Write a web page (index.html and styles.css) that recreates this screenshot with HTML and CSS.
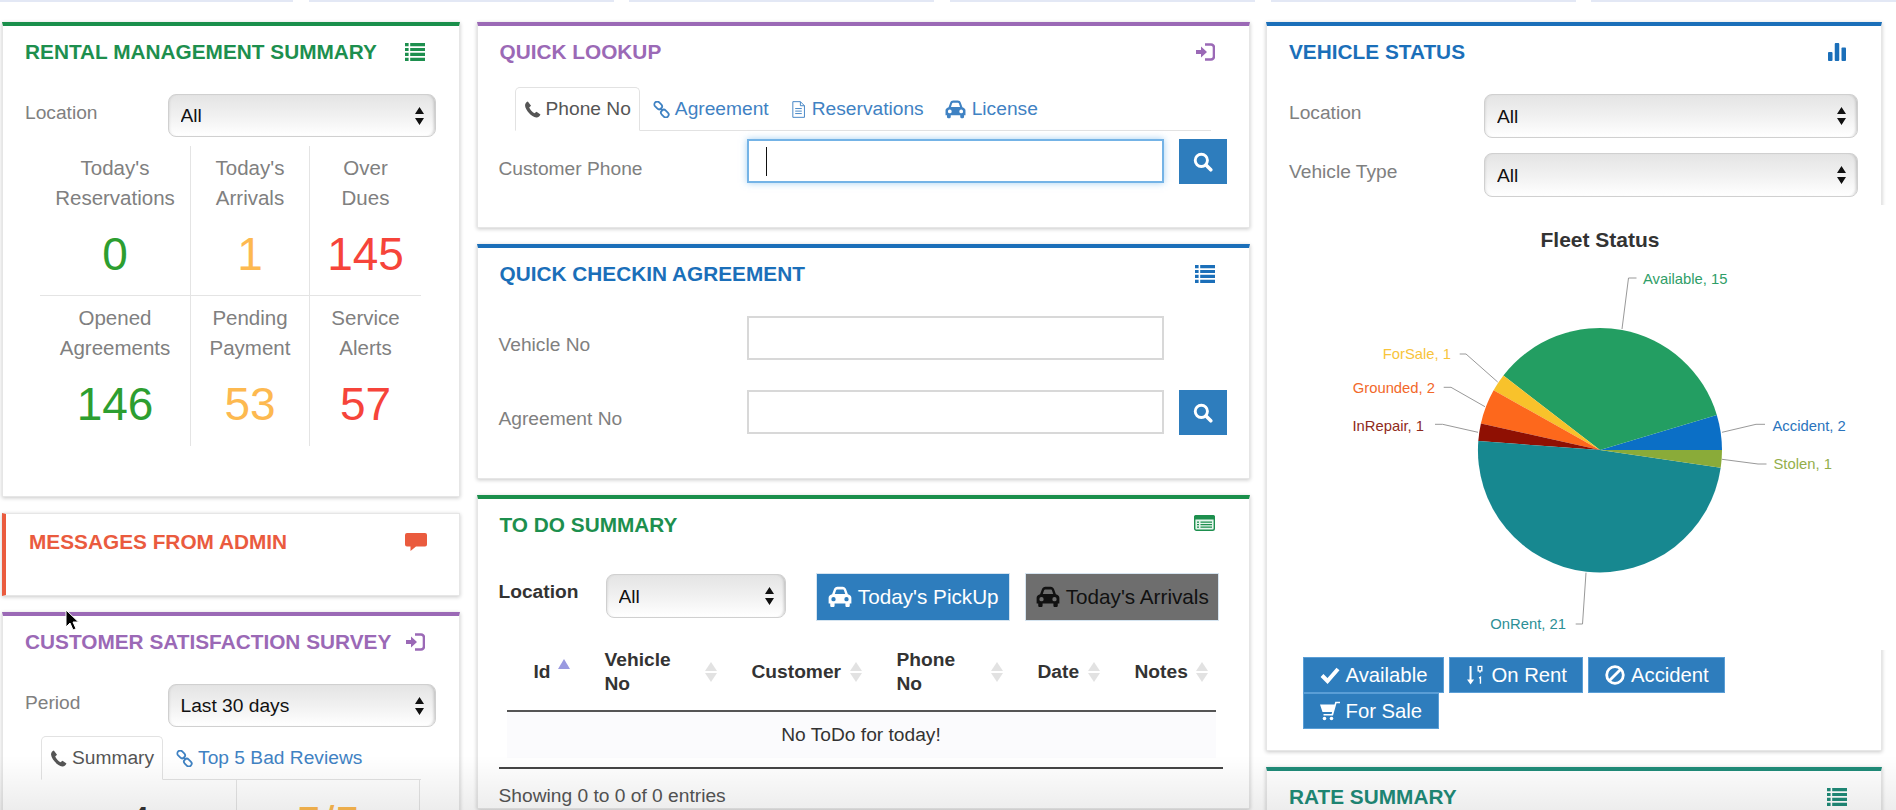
FILE: index.html
```html
<!DOCTYPE html>
<html lang="en">
<head>
    <meta charset="UTF-8">
    <title>Dashboard</title>
    <link rel="stylesheet" href="styles.css">
</head>
<body>
    <!-- icon sprite -->
    <svg class="sprite" xmlns="http://www.w3.org/2000/svg">
        <symbol id="i-list" viewBox="0 0 20 18"><path d="M0 0h3.6v3.2H0zM5.2 0H20v3.2H5.2zM0 4.9h3.6v3.2H0zM5.2 4.9H20v3.2H5.2zM0 9.8h3.6V13H0zM5.2 9.8H20V13H5.2zM0 14.7h3.6v3.2H0zM5.2 14.7H20v3.2H5.2z"/></symbol>
        <symbol id="i-signin" viewBox="0 0 20 18"><path d="M1 7h5V3.5L12 9l-6 5.500V11H1z"/><path d="M10 1.500h6a3 3 0 0 1 3 3v9a3 3 0 0 1-3 3h-6" fill="none" stroke="currentColor" stroke-width="2.600"/></symbol>
        <symbol id="i-comment" viewBox="0 0 22 18"><path d="M2 0h18a2 2 0 0 1 2 2v9.500a2 2 0 0 1-2 2H11L5.500 18v-4.500H2a2 2 0 0 1-2-2V2a2 2 0 0 1 2-2z"/></symbol>
        <symbol id="i-bars" viewBox="0 0 20 20"><rect x="0" y="10" width="5" height="10" rx="1"/><rect x="7.500" y="0" width="5" height="20" rx="1"/><rect x="15" y="5" width="5" height="15" rx="1"/></symbol>
        <symbol id="i-phone" viewBox="0 0 16 16"><path d="M3.600.5C2.300 1 .8 2.300 1 4.500 1.400 8.500 7 15 11.500 15.500c2 .2 3.500-1.500 4-2.800L11.800 10l-2 1.600C8 10.800 5.500 8 4.900 6.200l1.700-1.800z"/></symbol>
        <symbol id="i-link" viewBox="0 0 18 18"><g fill="none" stroke="currentColor" stroke-width="1.900"><rect x="1" y="1.700" width="9" height="6" rx="3" transform="rotate(45 5.500 4.700)"/><rect x="8" y="10.300" width="9" height="6" rx="3" transform="rotate(45 12.500 13.300)"/><path d="M7.500 7.500l3 3"/></g></symbol>
        <symbol id="i-file" viewBox="0 0 14 18"><path d="M1 .7h8l4.300 4.300v12.300H1zM9 .7V5h4.300M3.500 8h7M3.500 10.700h7M3.500 13.300h7" fill="none" stroke="currentColor" stroke-width="1"/></symbol>
        <symbol id="i-car" viewBox="0 0 24 20"><path fill-rule="evenodd" d="M9.600.5h4.800c1.500 0 2.700.9 3.200 2.300l1.700 4.700c1.600.6 3.200 1.500 3.200 3.200v5.300H21v2c0 .7-.5 1.200-1.200 1.200h-1.600c-.7 0-1.200-.5-1.200-1.200v-2H7v2c0 .7-.5 1.200-1.200 1.200H4.200C3.500 19.200 3 18.700 3 18v-2H1.500v-5.300c0-1.700 1.600-2.600 3.200-3.200l1.700-4.700C6.900 1.400 8.100.5 9.600.5zM9.500 3c-.7 0-1 .3-1.200.9L7.200 7.300h9.600l-1.100-3.400c-.2-.6-.5-.9-1.200-.9zM6 10a2 2 0 1 0 0 4 2 2 0 1 0 0-4zM18 10a2 2 0 1 0 0 4 2 2 0 1 0 0-4z"/></symbol>
        <symbol id="i-search" viewBox="0 0 18 18"><circle cx="7.500" cy="7.500" r="5.500" fill="none" stroke="currentColor" stroke-width="2.600"/><path d="M11.700 11.700L16 16" fill="none" stroke="currentColor" stroke-width="3.200" stroke-linecap="round"/></symbol>
        <symbol id="i-listalt" viewBox="0 0 21 16"><rect x=".7" y=".7" width="19.600" height="14.600" rx="1.800" fill="#e6f5ec" stroke="currentColor" stroke-width="1.400"/><path d="M0 2a2 2 0 0 1 2-2h17a2 2 0 0 1 2 2v2.500H0z"/><path d="M3 6.500h2v1.300H3zM6.500 6.500H18v1.300H6.500zM3 9h2v1.300H3zM6.500 9H18v1.300H6.500zM3 11.500h2v1.300H3zM6.500 11.500H18v1.300H6.500z"/></symbol>
        <symbol id="i-check" viewBox="0 0 20 18"><path d="M2 9.500l5.500 5.500L18 3" fill="none" stroke="currentColor" stroke-width="4"/></symbol>
        <symbol id="i-sort" viewBox="0 0 20 22"><path d="M4 1h2.200v15H9l-3.900 5.500L1.200 16H4z"/><path d="M13.500 1.500h4v5h-4zM15.500 6.500v2M14.500 14.500l1.500-1v7" fill="none" stroke="currentColor" stroke-width="1.500"/></symbol>
        <symbol id="i-ban" viewBox="0 0 20 20"><circle cx="10" cy="10" r="8.300" fill="none" stroke="currentColor" stroke-width="2.800"/><path d="M4.500 15.500l11-11" stroke="currentColor" stroke-width="2.800"/></symbol>
        <symbol id="i-cart" viewBox="0 0 20 20"><path d="M0 3.500h14.500l.8-2.800H20v1.600h-3.500L13 14.500H3.500v-1.600h8.100l.5-1.900H2.500z"/><circle cx="4.500" cy="17.500" r="1.800"/><circle cx="11.500" cy="17.500" r="1.800"/></symbol>
    </svg>

    <div class="strip">
        <span></span><span></span><span></span><span></span><span></span><span></span>
    </div>

    <main class="layout">
        <!-- columna izquierda -->
        <div class="col">
            <section class="card card-green h-summary">
                <header class="head">
                    <h2>RENTAL MANAGEMENT SUMMARY</h2>
                    <svg class="ico"><use href="#i-list"/></svg>
                </header>
                <div class="row-select left">
                    <label>Location</label>
                    <select><option>All</option></select>
                </div>
                <div class="stats">
                    <div class="stat"><p>Today's<br>Reservations</p><b class="green">0</b></div>
                    <div class="stat"><p>Today's<br>Arrivals</p><b class="orange">1</b></div>
                    <div class="stat"><p>Over<br>Dues</p><b class="red">145</b></div>
                    <div class="stat"><p>Opened<br>Agreements</p><b class="green">146</b></div>
                    <div class="stat"><p>Pending<br>Payment</p><b class="orange">53</b></div>
                    <div class="stat"><p>Service<br>Alerts</p><b class="red">57</b></div>
                </div>
            </section>

            <section class="card card-msg h-msg">
                <header class="head">
                    <h2>MESSAGES FROM ADMIN</h2>
                    <svg class="ico ico-wide"><use href="#i-comment"/></svg>
                </header>
            </section>

            <section class="card card-purple">
                <header class="head">
                    <h2>CUSTOMER SATISFACTION SURVEY</h2>
                    <svg class="ico"><use href="#i-signin"/></svg>
                </header>
                <div class="row-select left">
                    <label>Period</label>
                    <select><option>Last 30 days</option></select>
                </div>
                <ul class="tabs tabs-left">
                    <li class="active"><svg class="tab-ico"><use href="#i-phone"/></svg>Summary</li>
                    <li><svg class="tab-ico"><use href="#i-link"/></svg>Top 5 Bad Reviews</li>
                </ul>
                <div class="survey">
                    <div class="survey-cell">4</div>
                    <div class="survey-cell orange">5/5</div>
                </div>
            </section>
        </div>

        <!-- columna central -->
        <div class="col">
            <section class="card card-purple h-lookup">
                <header class="head">
                    <h2>QUICK LOOKUP</h2>
                    <svg class="ico"><use href="#i-signin"/></svg>
                </header>
                <ul class="tabs tabs-mid">
                    <li class="active"><svg class="tab-ico"><use href="#i-phone"/></svg>Phone No</li>
                    <li><svg class="tab-ico"><use href="#i-link"/></svg>Agreement</li>
                    <li><svg class="tab-ico"><use href="#i-file"/></svg>Reservations</li>
                    <li><svg class="tab-ico tab-car"><use href="#i-car"/></svg>License</li>
                </ul>
                <div class="field field-first">
                    <label>Customer Phone</label>
                    <div class="input-wrap">
                        <input class="focused" type="text">
                        <span class="caret"></span>
                    </div>
                    <button class="btn-search"><svg><use href="#i-search"/></svg></button>
                </div>
            </section>

            <section class="card card-blue h-checkin">
                <header class="head">
                    <h2>QUICK CHECKIN AGREEMENT</h2>
                    <svg class="ico"><use href="#i-list"/></svg>
                </header>
                <div class="field field-check">
                    <label>Vehicle No</label>
                    <div class="input-wrap"><input type="text"></div>
                </div>
                <div class="field field-check2">
                    <label>Agreement No</label>
                    <div class="input-wrap"><input type="text"></div>
                    <button class="btn-search"><svg><use href="#i-search"/></svg></button>
                </div>
            </section>

            <section class="card card-green">
                <header class="head">
                    <h2>TO DO SUMMARY</h2>
                    <svg class="ico ico-alt"><use href="#i-listalt"/></svg>
                </header>
                <div class="toolbar">
                    <label>Location</label>
                    <select><option>All</option></select>
                    <button class="btn btn-pick"><svg><use href="#i-car"/></svg>Today's PickUp</button>
                    <button class="btn btn-arr"><svg><use href="#i-car"/></svg>Today's Arrivals</button>
                </div>
                <table class="todo">
                    <colgroup>
                        <col class="c1"><col class="c2"><col class="c3"><col class="c4"><col class="c5"><col class="c6">
                    </colgroup>
                    <thead>
                        <tr>
                            <th><div>Id<i class="asc"></i></div></th>
                            <th><div>Vehicle<br>No<i class="both"></i></div></th>
                            <th><div>Customer<i class="both"></i></div></th>
                            <th><div>Phone<br>No<i class="both"></i></div></th>
                            <th><div>Date<i class="both"></i></div></th>
                            <th><div>Notes<i class="both"></i></div></th>
                        </tr>
                    </thead>
                    <tbody>
                        <tr><td colspan="6">No ToDo for today!</td></tr>
                    </tbody>
                </table>
                <div class="table-foot">Showing 0 to 0 of 0 entries</div>
            </section>
        </div>

        <!-- columna derecha -->
        <div class="col">
            <section class="card card-blue h-status">
                <header class="head">
                    <h2>VEHICLE STATUS</h2>
                    <svg class="ico"><use href="#i-bars"/></svg>
                </header>
                <div class="row-select right">
                    <label>Location</label>
                    <select><option>All</option></select>
                </div>
                <div class="row-select right second">
                    <label>Vehicle Type</label>
                    <select><option>All</option></select>
                </div>
                <svg class="chart" viewBox="1267 205 630 445" xmlns="http://www.w3.org/2000/svg">
                    <text class="chart-title" x="1600" y="247">Fleet Status</text>
                    <g transform="translate(1600 450)">
                        <path fill="#0b6fc6" d="M0 0L122 0A122 122 0 0 0 116.800 -35.100Z"/>
                        <path fill="#239e62" d="M0 0L116.800 -35.100A122 122 0 0 0 -96.600 -74.500Z"/>
                        <path fill="#f8c22b" d="M0 0L-96.600 -74.500A122 122 0 0 0 -106.400 -59.700Z"/>
                        <path fill="#fd681c" d="M0 0L-106.400 -59.700A122 122 0 0 0 -119.100 -26.500Z"/>
                        <path fill="#8f1003" d="M0 0L-119.100 -26.500A122 122 0 0 0 -121.700 -8.900Z"/>
                        <path fill="#178890" d="M0 0L-121.700 -8.900A122 122 0 0 0 120.700 17.800Z"/>
                        <path fill="#8aab39" d="M0 0L120.700 17.800A122 122 0 0 0 122 0Z"/>
                    </g>
                    <g class="leaders">
                        <path d="M1622 329L1628.500 278H1636.500"/>
                        <path d="M1459.700 354H1466L1497.700 382"/>
                        <path d="M1443.700 387.300H1451L1485 406.700"/>
                        <path d="M1435 424.300H1442.600L1478 432.300"/>
                        <path d="M1765 424.300H1756L1722 432.300"/>
                        <path d="M1766.500 464H1758L1722 459.300"/>
                        <path d="M1586 572.700L1582.500 624H1575.700"/>
                    </g>
                    <g class="labels">
                        <text x="1643" y="284" fill="#2f9e68">Available, 15</text>
                        <text x="1451" y="359" class="end" fill="#f8c43a">ForSale, 1</text>
                        <text x="1435" y="393" class="end" fill="#f2682a">Grounded, 2</text>
                        <text x="1424" y="431" class="end" fill="#8f2a20">InRepair, 1</text>
                        <text x="1772.500" y="431" fill="#2a74bd">Accident, 2</text>
                        <text x="1773.500" y="469" fill="#93ae4a">Stolen, 1</text>
                        <text x="1566" y="629" class="end" fill="#2d8f96">OnRent, 21</text>
                    </g>
                </svg>
                <div class="status-btns">
                    <button class="sbtn"><svg><use href="#i-check"/></svg>Available</button>
                    <button class="sbtn"><svg><use href="#i-sort"/></svg>On Rent</button>
                    <button class="sbtn"><svg><use href="#i-ban"/></svg>Accident</button>
                    <button class="sbtn"><svg><use href="#i-cart"/></svg>For Sale</button>
                </div>
            </section>

            <section class="card card-teal">
                <header class="head">
                    <h2>RATE SUMMARY</h2>
                    <svg class="ico"><use href="#i-list"/></svg>
                </header>
            </section>
        </div>
    </main>

    <svg class="cursor" viewBox="0 0 14 22" xmlns="http://www.w3.org/2000/svg"><path d="M1 1v17l4-4 3 7 3-1.300-3-6.700h5.500z" fill="#000" stroke="#fff" stroke-width="1"/></svg>
    <div class="fade"></div>
</body>
</html>
```

FILE: styles.css
```css
* {
    box-sizing: border-box;
}
html, body {
    margin: 0;
    height: 810px;
    overflow: hidden;
}
body {
    position: relative;
    background: #fff;
    font-family: "Liberation Sans", Arial, sans-serif;
    font-size: 19.2px;
    color: #333;
}
.sprite {
    display: none;
}

/* tiras de arriba */
.strip {
    display: flex;
    gap: 15.7px;
    height: 2px;
    margin-left: -12px;
}
.strip span {
    flex: 0 0 305px;
    background: #e3e8f5;
}

.layout {
    display: grid;
    grid-template-columns: 458px 773px 615.5px;
    column-gap: 16.5px;
    padding: 20px 0 0 2px;
}
.col {
    display: flex;
    flex-direction: column;
    gap: 16px;
}

/* cards */
.card {
    flex: none;
    background: #fff;
    border: 1px solid #e6e6e6;
    border-top: 4px solid #000;
    box-shadow: 0 1px 4px rgba(0, 0, 0, 0.22);
}
.card-green { border-top-color: #1a8f4b; color: #1d8f4e; }
.card-purple { border-top-color: #9b69b6; color: #9b69b6; }
.card-blue { border-top-color: #1b6fb9; color: #1b6fb9; }
.card-teal { border-top-color: #1f8b78; color: #1f8b78; }
.card-msg {
    border-top: 1px solid #e6e6e6;
    border-left: 4px solid #ea5b3e;
    color: #ea5b3e;
}
.h-summary { height: 475px; }
.h-msg { height: 83px; }
.h-lookup { height: 206px; }
.h-checkin { height: 235px; }
.h-status { height: 729px; }

.head {
    display: flex;
    justify-content: space-between;
    align-items: center;
    height: 52px;
    padding: 0 34px 0 22px;
}
.card-msg .head {
    padding: 3px 32px 0 23px;
}
.head h2 {
    margin: 0;
    font-size: 20.8px;
    font-weight: bold;
    white-space: nowrap;
}
.ico {
    flex: none;
    width: 20px;
    height: 18px;
    fill: currentColor;
}
.ico-wide {
    width: 22px;
}
.ico-alt {
    width: 21px;
    height: 16px;
    margin-top: -4px;
}

/* selects */
select {
    appearance: none;
    -webkit-appearance: none;
    height: 43px;
    padding: 0 30px 0 12px;
    border: 1px solid #d0d0d0;
    border-radius: 8px;
    font-family: inherit;
    font-size: 19.2px;
    color: #111;
    background:
        url("data:image/svg+xml,%3Csvg xmlns='http://www.w3.org/2000/svg' width='9' height='18'%3E%3Cpath d='M4.500 0L9 7H0zM4.500 18L0 11h9z' fill='%23111'/%3E%3C/svg%3E") no-repeat right 11px center,
        linear-gradient(#e4e4e4, #f2f2f2 55%, #fff);
    box-shadow: inset 2px 0 3px -2px rgba(0, 0, 0, 0.15), inset -3px 0 3px -2px rgba(0, 0, 0, 0.2);
}
.row-select {
    display: flex;
    align-items: flex-start;
    margin-top: 16px;
}
.row-select label {
    flex: none;
    line-height: 38px;
    color: #808080;
}
.row-select.left {
    padding-left: 22px;
}
.row-select.left label {
    width: 142.5px;
}
.row-select.left select {
    width: 268.5px;
}
.row-select.right {
    padding-left: 22px;
}
.row-select.right label {
    width: 195px;
}
.row-select.right select {
    width: 374px;
    height: 44px;
}
.row-select.second {
    margin-top: 15px;
}

/* contadores */
.stats {
    display: grid;
    grid-template-columns: 151px 119px 111px;
    width: 381px;
    margin: 9px 0 0 37px;
}
.stat {
    height: 150px;
    padding-top: 7px;
    text-align: center;
    border-right: 1px solid #e4e4e4;
}
.stat:nth-child(3n) {
    border-right: none;
}
.stat:nth-child(-n+3) {
    border-bottom: 1px solid #e4e4e4;
}
.stat p {
    margin: 0;
    font-size: 20.5px;
    line-height: 30px;
    color: #808080;
}
.stat b {
    display: block;
    margin-top: 16px;
    font-size: 46px;
    font-weight: normal;
    line-height: 50px;
}
.green { color: #2d9e30; }
.orange { color: #fdb950; }
.red { color: #f6443a; }

/* tabs */
.tabs {
    display: flex;
    margin: 9px 0 0;
    padding: 0;
    list-style: none;
    height: 44px;
    border-bottom: 1px solid #e2e2e2;
}
.tabs-left {
    width: 380px;
    margin-left: 38px;
}
.tabs-mid {
    width: 696px;
    margin-left: 37px;
}
.tabs li {
    display: flex;
    align-items: center;
    height: 44px;
    padding: 0 10.5px;
    color: #3f82c3;
}
.tabs li.active {
    padding: 0 8px;
    margin-right: 2.5px;
    color: #555;
    background: #fff;
    border: 1px solid #e2e2e2;
    border-bottom: 1px solid #fff;
    border-radius: 5px 5px 0 0;
}
.tab-ico {
    flex: none;
    width: 17px;
    height: 17px;
    margin-right: 5px;
    fill: currentColor;
}
.tab-car {
    width: 23px;
    height: 19px;
    margin-right: 5px;
    margin-left: -1px;
}

/* formulario */
.field {
    display: flex;
    align-items: flex-start;
    padding-left: 21px;
}
.field label {
    flex: none;
    width: 248px;
    padding-top: 7px;
    line-height: 44px;
    color: #808080;
}
.field-first {
    margin-top: 8px;
}
.field-first label {
    padding-top: 8px;
}
.field-check {
    margin-top: 16px;
}
.field-check2 {
    margin-top: 23px;
}
.input-wrap {
    position: relative;
    flex: none;
    width: 417px;
}
.input-wrap input {
    display: block;
    width: 100%;
    height: 44px;
    border: 2px solid #d8d8d8;
    background: #fff;
    outline: none;
}
.input-wrap input.focused {
    border-color: #74b3e6;
    box-shadow: 0 0 7px rgba(102, 175, 233, 0.6);
}
.caret {
    position: absolute;
    left: 19px;
    top: 8px;
    width: 1px;
    height: 29px;
    background: #111;
}
.btn-search {
    flex: none;
    width: 48px;
    height: 45px;
    margin-left: 15px;
    padding: 0;
    border: none;
    background: #2e7dbd;
    color: #fff;
}
.btn-search svg {
    display: block;
    width: 20px;
    height: 20px;
    margin: auto;
}

/* todo */
.toolbar {
    display: flex;
    align-items: flex-start;
    margin-top: 22px;
    padding-left: 21px;
    color: #333;
}
.toolbar label {
    flex: none;
    width: 107px;
    line-height: 38px;
    font-weight: bold;
}
.toolbar select {
    flex: none;
    width: 180px;
    height: 44px;
    margin-top: 1px;
}
.btn {
    display: flex;
    align-items: center;
    justify-content: center;
    flex: none;
    width: 194.5px;
    height: 48px;
    padding: 0;
    border: 1px solid #d5e4f0;
    font-family: inherit;
    font-size: 20.7px;
}
.btn svg {
    width: 26px;
    height: 22px;
    margin-right: 5px;
    fill: currentColor;
}
.btn-pick {
    margin-left: 30px;
    background: #2e7dbd;
    color: #fff;
}
.btn-arr {
    margin-left: 14.5px;
    background: #6e6e6e;
    color: #111;
}
.todo {
    width: 709px;
    margin: 19px 0 0 29px;
    border-collapse: collapse;
    table-layout: fixed;
    color: #333;
}
.c1 { width: 71px; }
.c2 { width: 147px; }
.c3 { width: 145px; }
.c4 { width: 141px; }
.c5 { width: 97px; }
.c6 { width: 108px; }
.todo th {
    height: 71px;
    padding: 0 8px 6px 27px;
    border-bottom: 2px solid #555;
    text-align: left;
    font-size: 19.2px;
    line-height: 24px;
}
.todo th div {
    position: relative;
}
.todo th i {
    position: absolute;
    right: 0;
    top: 50%;
    width: 12px;
    height: 20px;
    margin-top: -10px;
}
.todo th i.both::before,
.todo th i.both::after,
.todo th i.asc::before {
    content: "";
    position: absolute;
    left: 0;
    border-left: 6px solid transparent;
    border-right: 6px solid transparent;
}
.todo th i.both::before {
    top: 0;
    border-bottom: 9px solid #e2e2e2;
}
.todo th i.both::after {
    bottom: 0;
    border-top: 9px solid #e2e2e2;
}
.todo th i.asc::before {
    top: -3px;
    border-bottom: 10px solid #9a9ae0;
}
.todo td {
    height: 47px;
    text-align: center;
    background: #fbfbfd;
}
.table-foot {
    margin: 9px 0 0 21px;
    width: 724px;
    padding-top: 15px;
    border-top: 2px solid #444;
    line-height: 24px;
    color: #555;
}

/* encuesta */
.survey {
    display: grid;
    grid-template-columns: 196px 183px;
    margin-left: 38px;
    width: 380px;
    color: #333;
}
.survey-cell {
    height: 80px;
    padding-top: 18px;
    font-size: 46px;
    line-height: 50px;
    text-align: center;
    border-right: 1px solid #e4e4e4;
}
.survey-cell.orange {
    color: #fdb950;
}

/* vehicle status */
.chart {
    display: block;
    width: 630px;
    height: 445px;
    margin-top: 8px;
    background: #fff;
}
.chart-title {
    font-size: 21px;
    font-weight: bold;
    fill: #333;
    text-anchor: middle;
}
.leaders path {
    fill: none;
    stroke: #999;
    stroke-width: 1;
}
.labels text {
    font-size: 14.8px;
}
.labels .end {
    text-anchor: end;
}
.status-btns {
    display: flex;
    flex-wrap: wrap;
    column-gap: 5px;
    width: 470px;
    margin: 7px 0 0 36px;
}
.sbtn {
    display: flex;
    align-items: center;
    height: 36px;
    padding: 0 15.5px;
    border: 1px solid #5a9ed6;
    background: #2e7dbd;
    color: #fff;
    font-family: inherit;
    font-size: 20.3px;
}
.sbtn svg {
    width: 20px;
    height: 20px;
    margin-right: 6px;
    fill: currentColor;
}

.cursor {
    position: absolute;
    left: 65px;
    top: 609px;
    width: 14px;
    height: 22px;
}
.fade {
    position: absolute;
    left: 0;
    right: 0;
    bottom: 0;
    height: 55px;
    background: linear-gradient(rgba(0, 0, 0, 0), rgba(0, 0, 0, 0.07));
    pointer-events: none;
}
```
